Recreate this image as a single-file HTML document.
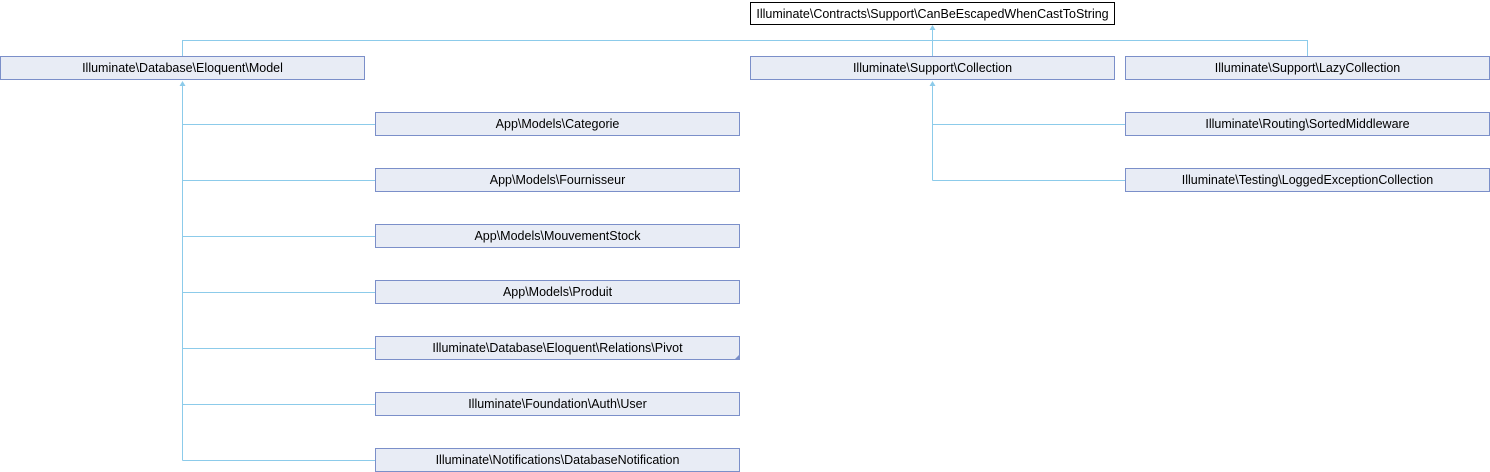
<!DOCTYPE html>
<html><head><meta charset="utf-8"><style>
html,body{margin:0;padding:0;background:#fff;width:1490px;height:472px;overflow:hidden}
svg text{font-family:"Liberation Sans",Arial,sans-serif;font-size:12.5px;fill:#000}
</style></head><body>
<svg width="1490" height="472" xmlns="http://www.w3.org/2000/svg">
<g stroke="#8ccbea" stroke-width="1" fill="none">
<path d="M182.5 56V40.5H1307.5V56"/>
<path d="M932.5 40V26"/>
<path d="M932.5 56V40"/>
<path d="M182.5 82V460.5"/>
<path d="M182.5 124.5H375M182.5 180.5H375M182.5 236.5H375M182.5 292.5H375M182.5 348.5H375M182.5 404.5H375M182.5 460.5H375"/>
<path d="M932.5 82V180.5"/>
<path d="M932.5 124.5H1125M932.5 180.5H1125"/>
</g>
<g fill="#8ccbea">
<path d="M932.5 25l-3 5h6z"/>
<path d="M182.5 81l-3 5h6z"/>
<path d="M932.5 81l-3 5h6z"/>
</g>
<rect x="750.5" y="2.5" width="364" height="22" fill="#fff" stroke="#000"/>
<text x="932.5" y="18" text-anchor="middle">Illuminate\Contracts\Support\CanBeEscapedWhenCastToString</text>
<g fill="#e8ecf5" stroke="#7b8fc9">
<rect x="0.5" y="56.5" width="364" height="23"/>
<rect x="750.5" y="56.5" width="364" height="23"/>
<rect x="1125.5" y="56.5" width="364" height="23"/>
<rect x="375.5" y="112.5" width="364" height="23"/>
<rect x="375.5" y="168.5" width="364" height="23"/>
<rect x="375.5" y="224.5" width="364" height="23"/>
<rect x="375.5" y="280.5" width="364" height="23"/>
<rect x="375.5" y="336.5" width="364" height="23"/>
<rect x="375.5" y="392.5" width="364" height="23"/>
<rect x="375.5" y="448.5" width="364" height="23"/>
<rect x="1125.5" y="112.5" width="364" height="23"/>
<rect x="1125.5" y="168.5" width="364" height="23"/>
</g>
<path d="M739 355l-4 4h4z" fill="#7b8fc9"/>
<g text-anchor="middle">
<text x="182.5" y="72">Illuminate\Database\Eloquent\Model</text>
<text x="932.5" y="72">Illuminate\Support\Collection</text>
<text x="1307.5" y="72">Illuminate\Support\LazyCollection</text>
<text x="557.5" y="128">App\Models\Categorie</text>
<text x="557.5" y="184">App\Models\Fournisseur</text>
<text x="557.5" y="240">App\Models\MouvementStock</text>
<text x="557.5" y="296">App\Models\Produit</text>
<text x="557.5" y="352">Illuminate\Database\Eloquent\Relations\Pivot</text>
<text x="557.5" y="408">Illuminate\Foundation\Auth\User</text>
<text x="557.5" y="464">Illuminate\Notifications\DatabaseNotification</text>
<text x="1307.5" y="128">Illuminate\Routing\SortedMiddleware</text>
<text x="1307.5" y="184">Illuminate\Testing\LoggedExceptionCollection</text>
</g>
</svg>
</body></html>
